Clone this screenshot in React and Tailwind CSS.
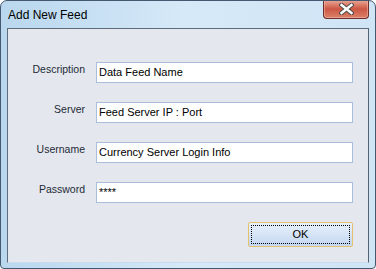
const fields = [
  { label: 'Description', value: 'Data Feed Name' },
  { label: 'Server', value: 'Feed Server IP : Port' },
  { label: 'Username', value: 'Currency Server Login Info' },
  { label: 'Password', value: '****' },
];

function CloseGlyph() {
  return (
    <svg width="15" height="12" viewBox="0 0 15 12">
      <path d="M2.5 2 L12.5 10 M12.5 2 L2.5 10" stroke="#4b4b4b" strokeWidth="4.4" strokeLinecap="square" />
      <path d="M2.5 2 L12.5 10 M12.5 2 L2.5 10" stroke="#ffffff" strokeWidth="2.4" strokeLinecap="square" />
    </svg>
  );
}

export default function App() {
  return (
    <div
      className="w-[376px] h-[269px] flex flex-col rounded-t-[7px] rounded-b-[4px] border border-[#44596f] bg-gradient-to-r from-[#b9d7ee] via-[#d6e9f8] to-[#cfe4f5] overflow-hidden"
      style={{ fontFamily: '"Liberation Sans", Arial, sans-serif' }}
    >
      {/* Title bar */}
      <div className="h-[27px] flex items-start justify-between shrink-0">
        <span className="pl-[7px] pt-[7px] text-[12px] leading-[14px] text-black">Add New Feed</span>
        <button className="mr-[6px] -mt-px w-[46px] h-[19px] flex items-center justify-center rounded-b-[4px] border border-[#6d2f2a] border-t-0 bg-gradient-to-b from-[#eaa999] via-[#cc5643] to-[#db8168] shadow-[inset_0_0_0_1px_rgba(255,200,190,0.45)]">
          <CloseGlyph />
        </button>
      </div>

      {/* Client area */}
      <div className="mx-[6px] h-[235px] border border-[#5f6d7b] border-b-[#c9dcee] border-r-[#56626e] bg-[#e4e8ee] flex flex-col">
        <div className="pt-[33px] flex flex-col gap-[19px]">
          {fields.map((f) => (
            <div key={f.label} className="flex items-center h-[21px]">
              <span className="w-[77px] text-right text-[10.5px] leading-[13px] text-[#1e2a38] mb-[6px]">
                {f.label}
              </span>
              <div className="ml-[11px] w-[257px] h-[21px] border border-[#a8bedb] bg-white pl-[2px] flex items-center text-[11px] text-black">
                {f.value}
              </div>
            </div>
          ))}
        </div>
        <div className="flex justify-end pr-[15px] pt-[19px]">
          <button className="w-[105px] h-[25px] rounded-[2px] border border-[#e3c36d] bg-gradient-to-b from-[#e8f1fb] via-[#d5e4f6] to-[#c3d7f1] p-[2px]">
            <div className="w-full h-full border border-dotted border-black flex items-center justify-center text-[11px] text-black">
              OK
            </div>
          </button>
        </div>
      </div>
    </div>
  );
}
